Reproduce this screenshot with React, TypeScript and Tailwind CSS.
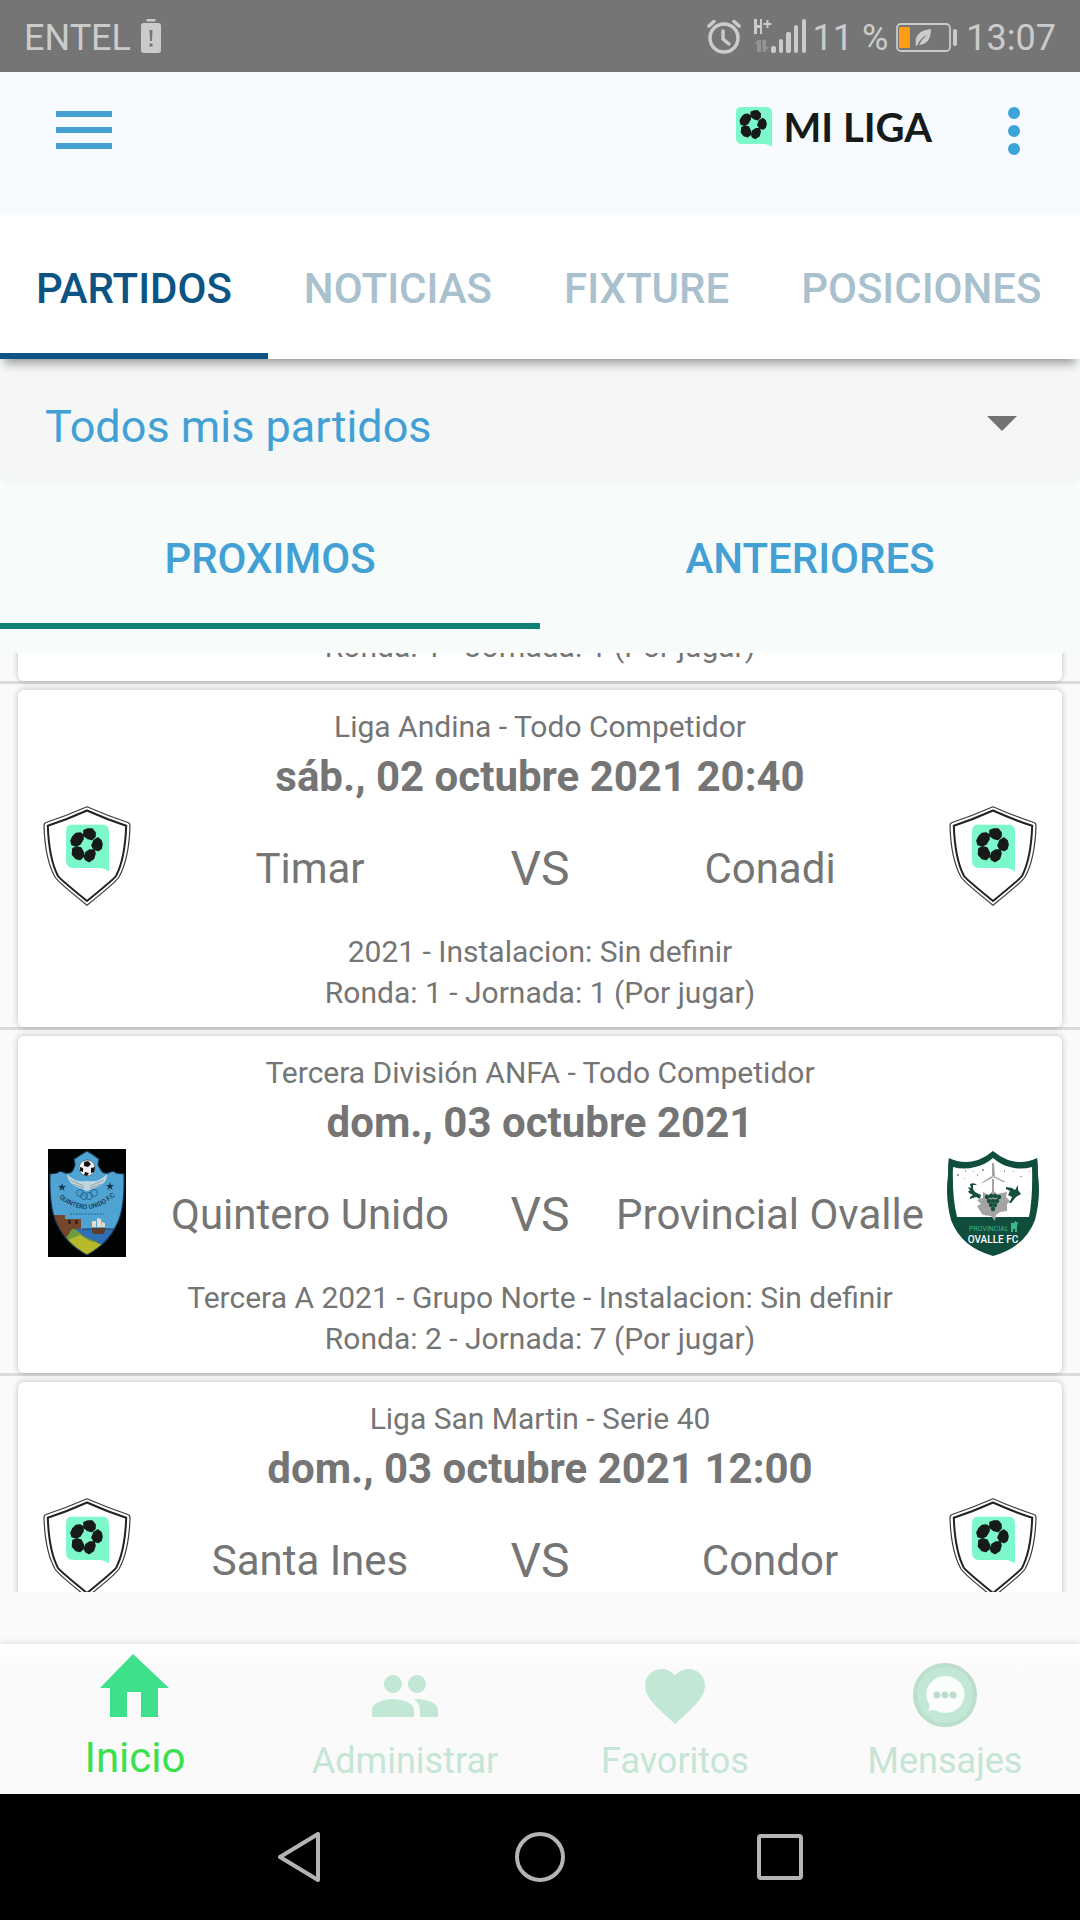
import React, { useLayoutEffect, useRef, useState } from 'react';
import { MdFavorite, MdPeople } from 'react-icons/md';

type CrestName = 'default' | 'quintero' | 'ovalle';

interface Team {
  name: string;
  crest: CrestName;
}

interface Match {
  id: number;
  league?: string;
  date?: string;
  home?: Team;
  away?: Team;
  venue?: string;
  round: string;
}

const matches: Match[] = [
  { id: 1, round: 'Ronda: 1 - Jornada: 1 (Por jugar)' },
  {
    id: 2,
    league: 'Liga Andina - Todo Competidor',
    date: 'sáb., 02 octubre 2021 20:40',
    home: { name: 'Timar', crest: 'default' },
    away: { name: 'Conadi', crest: 'default' },
    venue: '2021 - Instalacion: Sin definir',
    round: 'Ronda: 1 - Jornada: 1 (Por jugar)',
  },
  {
    id: 3,
    league: 'Tercera División ANFA - Todo Competidor',
    date: 'dom., 03 octubre 2021',
    home: { name: 'Quintero Unido', crest: 'quintero' },
    away: { name: 'Provincial Ovalle', crest: 'ovalle' },
    venue: 'Tercera A 2021 - Grupo Norte - Instalacion: Sin definir',
    round: 'Ronda: 2 - Jornada: 7 (Por jugar)',
  },
  {
    id: 4,
    league: 'Liga San Martin - Serie 40',
    date: 'dom., 03 octubre 2021 12:00',
    home: { name: 'Santa Ines', crest: 'default' },
    away: { name: 'Condor', crest: 'default' },
    round: '',
  },
];

const BallMark = (props: React.SVGProps<SVGSVGElement>) => (
  <svg viewBox="0 0 43 47" preserveAspectRatio="none" {...props}>
    <path d="M6 0h30q7 0 7 7v40q-3-3-9-3.500H7Q0 43.500 0 36V7q0-7 6-7z" fill="#7cf8cb" />
    <g fill="#161a19" stroke="#161a19" strokeWidth="1.600" strokeLinejoin="round">
      <path d="M18 6l4-1.500h4l3 3.500v4l-3 3-4-1-4-3z" />
      <path d="M7 12l3-3 4-.5 3 2v4l-3 5-4 2-4-1.500-1-4z" />
      <path d="M7 24l4-1.500 4 1 2.500 5-.5 4-3 2.500-4-1-3.500-4z" />
      <path d="M20 28l4-2.500 4 0 1 3.500-1.500 5-4.500 3-3.500-2-1-3z" />
      <path d="M28 16l4-2.500 3 2.500 1 4-1 4-3 2-4-1.500-2-3.500z" />
    </g>
  </svg>
);

const DefaultCrest = () => (
  <svg viewBox="0 0 88 102" className="h-[102px] w-[88px]" aria-hidden="true">
    <path
      d="M44 .8Q23 10 3 16.500 1 17 1 20 2 53 12 71 15 76 44 99.200 73 76 76 71 86 53 87 20 87 17 85 16.500 65 10 44 .8z"
      fill="#fff"
      stroke="#3c3c3c"
      strokeWidth="1.200"
    />
    <path
      d="M44 4.500Q24 13.500 4.800 19.800 6 53 15 70 17 73 44 95 71 73 73 70 82 53 83.200 19.800 64 13.500 44 4.500z"
      fill="none"
      stroke="#222"
      strokeWidth="2"
    />
    <BallMark x="23" y="18.500" width="43" height="47" />
  </svg>
);

const QuinteroCrest = () => (
  <svg viewBox="0 0 78 108" className="h-[108px] w-[78px]" aria-hidden="true">
    <defs>
      <clipPath id="quintero-shield">
        <path d="M39 2l5 3 7 5-1 6 3 5q2 4 7 3 6-3 8 0l8 1q1 35-7 50-9 20-30 31Q18 95 9 75 1 60 2 25l7-1q3-3 8 0 6 1 8-3l2-5-1-6 8-5z" />
      </clipPath>
      <path id="quintero-arc" d="M9 47Q39 74 69 45" />
    </defs>
    <path d="M0 0h78v108H0z" fill="#020303" />
    <g clipPath="url(#quintero-shield)">
      <path d="M0 0h78v108H0z" fill="#4fa3d3" />
      <path d="M27 80h51v28H27z" fill="#2f6fb5" />
      <path d="M4 78h20l13 10 12 5 8 15H4z" fill="#6f9d3b" />
      <path d="M12 94l20-8 10 6 14 4-17 12z" fill="#b6b929" />
      <path d="M4 66h13v4h16v10H24l-5 8-13-2z" fill="#74472a" />
      <path d="M20 71h3v4h-3zM27 71h3v4h-3z" fill="#3d2618" />
      <path d="M34 80h9M57 80h20" stroke="#1d3f66" />
      <path d="M43 79h15l-2 6H45z" fill="#5d3e2a" />
      <path d="M44 72l4 0v6h-4zM49 69l4 1 1 8h-5zM54 73l3 1v4h-3z" fill="#e6dccb" />
    </g>
    <path
      d="M39 2l5 3 7 5-1 6 3 5q2 4 7 3 6-3 8 0l8 1q1 35-7 50-9 20-30 31Q18 95 9 75 1 60 2 25l7-1q3-3 8 0 6 1 8-3l2-5-1-6 8-5z"
      fill="none"
      stroke="#16324a"
      strokeWidth="1.200"
    />
    <path d="M19 25q8 9 20 7 12 2 20-7 0 10-10 13l-10 4-10-4q-9-3-10-13z" fill="#c3d6de" />
    <path d="M22 31l14 6M24 35l12 4M56 31l-14 6M54 35l-12 4" stroke="#7f97a5" strokeWidth=".8" />
    <circle cx="39" cy="19" r="8" fill="#f2f2f2" stroke="#33475a" strokeWidth=".6" />
    <path d="M36 13l4-1 3 3-3 3-4-1zM32 18l3 1v4l-3-1zM43 19l4-1-1 5-3 1zM37 23l4 1-2 3-3-1z" fill="#151515" />
    <g fill="#173650">
      <path d="M14 34l1 3h3l-2.500 2 1 3-2.500-2-2.500 2 1-3L10 37h3z" />
      <path d="M62 33l1 3h3l-2.500 2 1 3-2.500-2-2.500 2 1-3-2.500-2h3z" />
    </g>
    <g fill="none" stroke="#23618c" strokeWidth=".9">
      <circle cx="32" cy="44" r="3.500" />
      <circle cx="36" cy="47" r="3.500" />
      <circle cx="41" cy="47" r="3.500" />
      <circle cx="46" cy="44" r="3.500" />
    </g>
    <text fontFamily="Roboto, sans-serif" fontSize="6.500" fontWeight="500" fill="#15384f">
      <textPath href="#quintero-arc" startOffset="50%" textAnchor="middle">QUINTERO UNIDO F.C</textPath>
    </text>
    <path d="M22 65h34" stroke="#2c6b95" strokeDasharray="2 1" />
  </svg>
);

const OvalleCrest = () => (
  <svg viewBox="0 0 94 105" className="h-[105px] w-[94px]" aria-hidden="true">
    <path d="M47 0q7 6 15 9 15 5 29-2 1 3 1 17 3 22-3 45Q79 96 47 105 15 96 5 69-1 47 2 24 2 10 3 7q14 7 29 2 8-3 15-9z" fill="#0f4d3c" />
    <path d="M47 7q8 7 17 9 11 3 22 0 1 30-3 50H11Q6 46 7 16q11 3 22 0 10-2 18-9z" fill="#fff" />
    <g fill="#a3a3a3">
      <path d="M46 12l2 0 1 13h-3zM46 25l2 1-13 7 3-3zM48 25l12 6-3 0-10-5zM46 28h2v14h-2z" />
      <path d="M47 39l4 4 10-2-1 5 4 4-3 3 0 7-7 1-4 3-1 6-4-5-8-1-3-4-3-5 4-2-4-4 6-2 0-6 6 3z" />
      <path d="M11 23h2v2h-2zM19 19h1v2h-1zM27 20h1v1h-1zM36 18h2v2h-2zM18 27h1v1h-1zM58 19h1v2h-1zM67 20h1v1h-1zM74 25h2v1h-2zM83 20h1v1h-1zM31 23h1v2h-1z" />
    </g>
    <g fill="#164f3e">
      <circle cx="41" cy="46" r="2.200" />
      <circle cx="45" cy="45" r="2.200" />
      <circle cx="49" cy="45" r="2.200" />
      <circle cx="53" cy="46" r="2.200" />
      <circle cx="43" cy="50" r="2.200" />
      <circle cx="47" cy="50" r="2.200" />
      <circle cx="51" cy="50" r="2.200" />
      <circle cx="45" cy="54" r="2.200" />
      <circle cx="49" cy="54" r="2.200" />
      <circle cx="47" cy="58" r="2.200" />
      <path d="M24 33q4-2 7 1l-4 0 0 4 2 3 6 3-1 4-4-2-6 2 0-2 3-2-4-2-1-2 2 0-2-4 3 1z" />
      <path d="M60 36l6 1 3 2 3-5 0 5 3 4-5 3-5 6-2 0 3-6-4-2 1-2 1-2-4-2z" />
    </g>
    <text x="23" y="80" fontFamily="Roboto, sans-serif" fontSize="7" fill="#3fb58a">PROVINCIAL</text>
    <path d="M65 72l3 0 1-2 3 2-1 3 0 6h-2v-3h-2v3h-2v-5z" fill="#3fb58a" />
    <text x="47" y="92" textAnchor="middle" fontFamily="Roboto, sans-serif" fontSize="10" fontWeight="500" fill="#fff">OVALLE FC</text>
  </svg>
);

const crests = {
  default: DefaultCrest,
  quintero: QuinteroCrest,
  ovalle: OvalleCrest,
};

const Crest = ({ name }: { name: CrestName }) => {
  const Drawing = crests[name];
  return (
    <div className="flex size-[108px] shrink-0 items-center justify-center">
      <Drawing />
    </div>
  );
};

const StatusBar = () => (
  <div className="flex h-[72px] shrink-0 items-center justify-between bg-[#757575] px-6 pt-1 text-4xl text-[#cbcbcb]">
    <div className="flex items-center gap-2.5">
      <span>ENTEL</span>
      <svg viewBox="0 0 20 34" className="mb-1 h-[34px] w-5" fill="#cbcbcb" aria-hidden="true">
        <path d="M5.500 0h9v2.500h-9z" />
        <path d="M3 4h14q3 0 3 3v24q0 3-3 3H3q-3 0-3-3V7q0-3 3-3z" />
        <path d="M8.500 11h3l-.5 11H9zM8.500 24.500h3v3h-3z" fill="#757575" />
      </svg>
    </div>
    <div className="flex items-center">
      <svg viewBox="0 0 34 35" className="mb-1 h-[35px] w-[34px]" fill="none" stroke="#cbcbcb" strokeWidth="3.500" strokeLinecap="round" aria-hidden="true">
        <circle cx="17" cy="19" r="14" />
        <path d="M16 12v8l6 5M2 7l5-4.500M32 7l-5-4.500" />
      </svg>
      <svg viewBox="0 0 54 35" className="mb-1 ml-3 h-[35px] w-[54px]" fill="#cbcbcb" aria-hidden="true">
        <path d="M1 0h3v6h3V0h2v15H7V9H4v6H1zM13.500 1h2v3h3v2h-3v3h-2V6h-3V4h3z" />
        <path d="M4 33V25H1l4.500-4H8v12zM9.500 21H13v7h3l-4 5H9.500z" fill="#949494" />
        <rect x="18" y="27" width="5" height="7" rx="2" />
        <rect x="26" y="20" width="4" height="14" rx="2" />
        <rect x="33" y="13" width="5" height="21" rx="2" />
        <rect x="41" y="6" width="4" height="28" rx="2" />
        <rect x="49" y="0" width="4" height="34" rx="2" />
      </svg>
      <span className="ml-1.5">11 %</span>
      <svg viewBox="0 0 62 30" className="ml-2 h-[30px] w-[62px]" aria-hidden="true">
        <rect x="1" y="1" width="53" height="27" rx="4" fill="none" stroke="#cbcbcb" strokeWidth="1.800" />
        <rect x="3" y="4" width="11" height="21" rx="1" fill="#ff9d15" />
        <path d="M20 23q-3-15 15-17 0 15-12 16 3-6 8-10-7 3-10 11z" fill="#cbcbcb" />
        <rect x="57" y="6" width="4" height="17" rx="2" fill="#cbcbcb" />
      </svg>
      <span className="ml-2">13:07</span>
    </div>
  </div>
);

const Header = () => (
  <header className="flex h-[143px] shrink-0 items-start justify-between bg-[#f7faff] pr-[50px] pl-14">
    <button aria-label="Menú" className="mt-[39px]">
      <svg viewBox="0 0 56 38" className="h-[38px] w-14" fill="#43a0d0">
        <path d="M0 0h56v6H0zM0 16h56v6H0zM0 32h56v6H0z" />
      </svg>
    </button>
    <div className="mt-[35px] flex items-start">
      <BallMark className="h-10 w-9" aria-hidden="true" />
      <span className="ml-3 font-[Lato] text-[40px] leading-[40px] font-bold text-[#161a19]">MI LIGA</span>
      <button aria-label="Más opciones" className="ml-[66px]">
        <svg viewBox="0 0 32 48" className="h-12 w-8" fill="#3ba3d8">
          <circle cx="16" cy="6" r="6" />
          <circle cx="16" cy="24" r="6" />
          <circle cx="16" cy="42" r="6" />
        </svg>
      </button>
    </div>
  </header>
);

const MatchCard = ({ match }: { match: Match }) => (
  <li className="border-b-[3px] border-[#dbdbdb] px-[18px] pt-1.5">
    <article className="rounded-md bg-white px-[15px] pt-4 pb-[14px] text-center text-[30px] leading-[41px] shadow-[0_0_6px_rgba(0,0,0,0.25)]">
      {match.league && <p className="leading-[42px]">{match.league}</p>}
      {match.date && <h2 className="text-[42px] leading-[58px] font-bold">{match.date}</h2>}
      {match.home && match.away && (
        <div className="-mt-[3px] mb-5 flex items-center text-[42px] leading-[56px]">
          <Crest name={match.home.crest} />
          <span className="flex-1 pt-6">{match.home.name}</span>
          <span className="w-[122px] pt-6 text-5xl leading-[56px]">VS</span>
          <span className="flex-1 pt-6">{match.away.name}</span>
          <Crest name={match.away.crest} />
        </div>
      )}
      {match.venue && <p>{match.venue}</p>}
      <p className="min-h-[41px]">{match.round}</p>
    </article>
  </li>
);

const HomeIcon = () => (
  <svg viewBox="0 0 72 72" className="size-[72px]" fill="#3fe08b" aria-hidden="true">
    <path d="M34 0L70 34H59v29H42V38H28v25H11V34H1z" />
  </svg>
);

const MessagesIcon = () => (
  <svg viewBox="0 0 72 72" className="size-[72px]" aria-hidden="true">
    <circle cx="36" cy="35" r="31" fill="#c2e8d5" stroke="#bcdccc" strokeWidth="2" />
    <circle cx="36" cy="35" r="29" fill="none" stroke="#b0d3c2" strokeWidth=".8" />
    <path d="M36 16a19 18.500 0 1 1-8 35q-4-2-9 0 2-3 1-7A19 18.500 0 0 1 36 16z" fill="#fbfdfc" />
    <g fill="#bcdccc">
      <circle cx="28" cy="35" r="3.500" />
      <circle cx="36" cy="35" r="3.500" />
      <circle cx="44" cy="35" r="3.500" />
    </g>
  </svg>
);

const BottomNav = () => {
  const navItems = [
    { id: 'administrar', label: 'Administrar', icon: <MdPeople size={72} color="#c2e8d5" /> },
    { id: 'favoritos', label: 'Favoritos', icon: <MdFavorite size={72} color="#c2e8d5" /> },
    { id: 'mensajes', label: 'Mensajes', icon: <MessagesIcon /> },
  ];

  return (
    <nav className="grid h-[150px] shrink-0 grid-cols-4 bg-linear-to-b from-white to-[#fafafa] to-20% pb-3 shadow-[0_-1px_6px_rgba(0,0,0,0.12)]">
      <button className="flex flex-col items-center justify-end gap-2 text-[42px] leading-[48px] text-[#3ae04e]">
        <HomeIcon />
        <span>Inicio</span>
      </button>
      {navItems.map((item) => (
        <button
          key={item.id}
          className="flex flex-col items-center justify-end gap-2 text-4xl leading-[42px] text-[#c5e5d5]"
        >
          {item.icon}
          <span>{item.label}</span>
        </button>
      ))}
    </nav>
  );
};

const SystemNav = () => (
  <div className="flex h-[126px] shrink-0 items-center justify-center gap-[190px] bg-black">
    <button aria-label="Atrás">
      <svg viewBox="0 0 50 50" className="size-[50px]" fill="none" stroke="#b4b4b4" strokeWidth="4" strokeLinejoin="round">
        <path d="M5 25L43 2v46z" />
      </svg>
    </button>
    <button aria-label="Pantalla principal">
      <svg viewBox="0 0 50 50" className="size-[50px]" fill="none" stroke="#b4b4b4" strokeWidth="4">
        <circle cx="25" cy="25" r="23" />
      </svg>
    </button>
    <button aria-label="Recientes">
      <svg viewBox="0 0 50 50" className="size-[50px]" fill="none" stroke="#b4b4b4" strokeWidth="4">
        <rect x="4" y="4" width="42" height="42" rx="2" />
      </svg>
    </button>
  </div>
);

const App: React.FC = () => {
  const [tab, setTab] = useState('PARTIDOS');
  const [period, setPeriod] = useState('PROXIMOS');
  const listRef = useRef<HTMLUListElement>(null);

  useLayoutEffect(() => {
    if (listRef.current) listRef.current.scrollTop = 49;
  }, []);

  return (
    <div className="flex h-screen flex-col bg-[#fafafa] font-[Roboto,sans-serif] text-[#757575]">
      <StatusBar />
      <Header />

      <div className="relative z-10 flex h-36 shrink-0 bg-white shadow-[0_8px_10px_-4px_rgba(0,0,0,0.4)]">
        {['PARTIDOS', 'NOTICIAS', 'FIXTURE', 'POSICIONES'].map((name) => (
          <button
            key={name}
            onClick={() => setTab(name)}
            className={`border-b-[6px] px-9 pt-2 text-[42px] font-medium ${
              tab === name ? 'border-[#0b5483] text-[#0b5483]' : 'border-transparent text-[#a9c0cd]'
            }`}
          >
            {name}
          </button>
        ))}
      </div>

      <div className="shrink-0 bg-[#f7fcfa]">
        <div className="relative">
          <select
            aria-label="Partidos"
            className="h-[126px] w-full appearance-none rounded-xl bg-[#f4f7f6] px-[45px] pt-2.5 text-[45px] text-[#43a0d4]"
          >
            <option>Todos mis partidos</option>
          </select>
          <svg viewBox="0 0 30 15" className="pointer-events-none absolute top-[57px] right-[63px] h-[15px] w-[30px]" fill="#717372">
            <path d="M0 0h30L15 15z" />
          </svg>
        </div>
        <div className="flex pb-6">
          {['PROXIMOS', 'ANTERIORES'].map((name) => (
            <button
              key={name}
              onClick={() => setPeriod(name)}
              className={`h-36 flex-1 border-b-[6px] pt-2 text-[42px] font-medium text-[#43a0d4] ${
                period === name ? 'border-[#108073]' : 'border-transparent'
              }`}
            >
              {name}
            </button>
          ))}
        </div>
      </div>

      <ul ref={listRef} className="mb-[52px] min-h-0 flex-1 overflow-y-auto [scrollbar-width:none]">
        {matches.map((match) => (
          <MatchCard key={match.id} match={match} />
        ))}
      </ul>

      <BottomNav />
      <SystemNav />
    </div>
  );
};

export default App;
